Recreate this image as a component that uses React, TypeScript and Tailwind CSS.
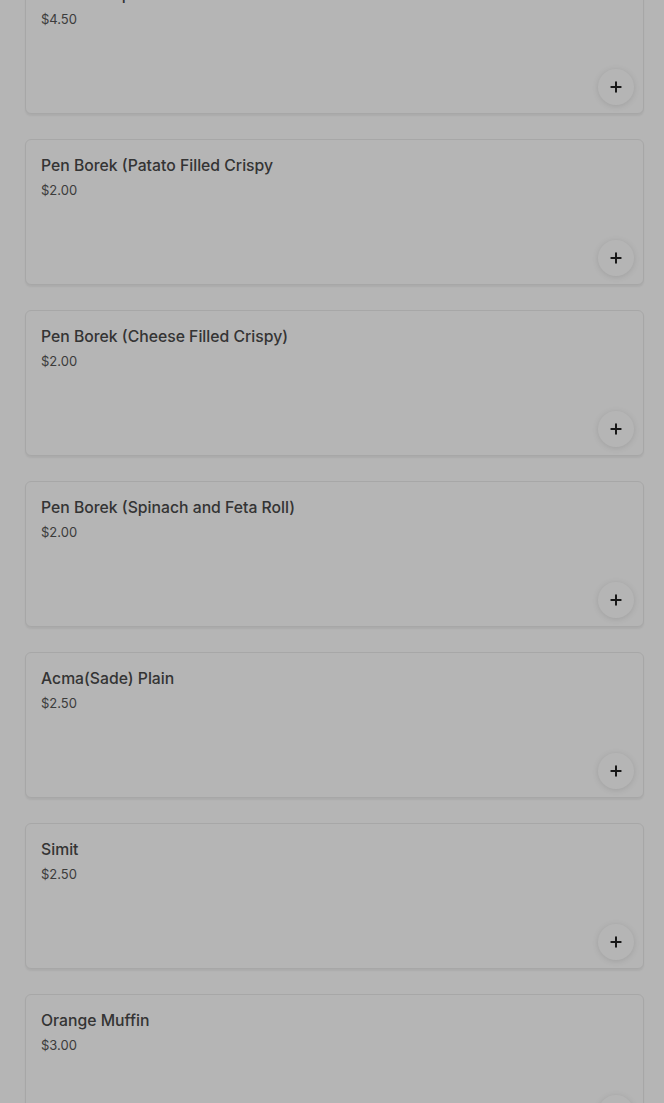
import React from 'react';
import { Plus } from 'lucide-react';

const ITEMS = [
  { name: 'Gozleme Spinach & Feta', price: '$4.50' },
  { name: 'Pen Borek (Patato Filled Crispy', price: '$2.00' },
  { name: 'Pen Borek (Cheese Filled Crispy)', price: '$2.00' },
  { name: 'Pen Borek (Spinach and Feta Roll)', price: '$2.00' },
  { name: 'Acma(Sade) Plain', price: '$2.50' },
  { name: 'Simit', price: '$2.50' },
  { name: 'Orange Muffin', price: '$3.00' },
];

const MenuCard: React.FC<{ name: string; price: string }> = ({ name, price }) => (
  <div className="h-[146px] bg-white border border-[#ececec] rounded-md shadow-[0_2px_2px_rgba(0,0,0,0.06)] pt-4 pl-[15px] pr-[9px] pb-2 flex flex-col">
    <h3 className="text-[15.75px] leading-5 font-medium text-[#4a4a4a]">{name}</h3>
    <p className="mt-[4px] text-[13px] leading-5 text-[#555]">{price}</p>
    <button className="mt-auto self-end w-9 h-9 rounded-full bg-white shadow-[0_1px_6px_rgba(0,0,0,0.12)] flex items-center justify-center text-[#222]">
      <Plus className="w-4 h-4" strokeWidth={3} />
    </button>
  </div>
);

export default function App() {
  return (
    <div className="relative min-h-screen bg-white overflow-hidden" style={{ fontFamily: 'Inter, "Noto Sans", sans-serif' }}>
      <div className="-mt-[32px] pl-[25px] pr-[20px] flex flex-col gap-[25px]">
        {ITEMS.map((item) => (
          <MenuCard key={item.name} name={item.name} price={item.price} />
        ))}
      </div>
      {/* backdrop */}
      <div className="fixed inset-0 bg-black/[0.29]" />
    </div>
  );
}
